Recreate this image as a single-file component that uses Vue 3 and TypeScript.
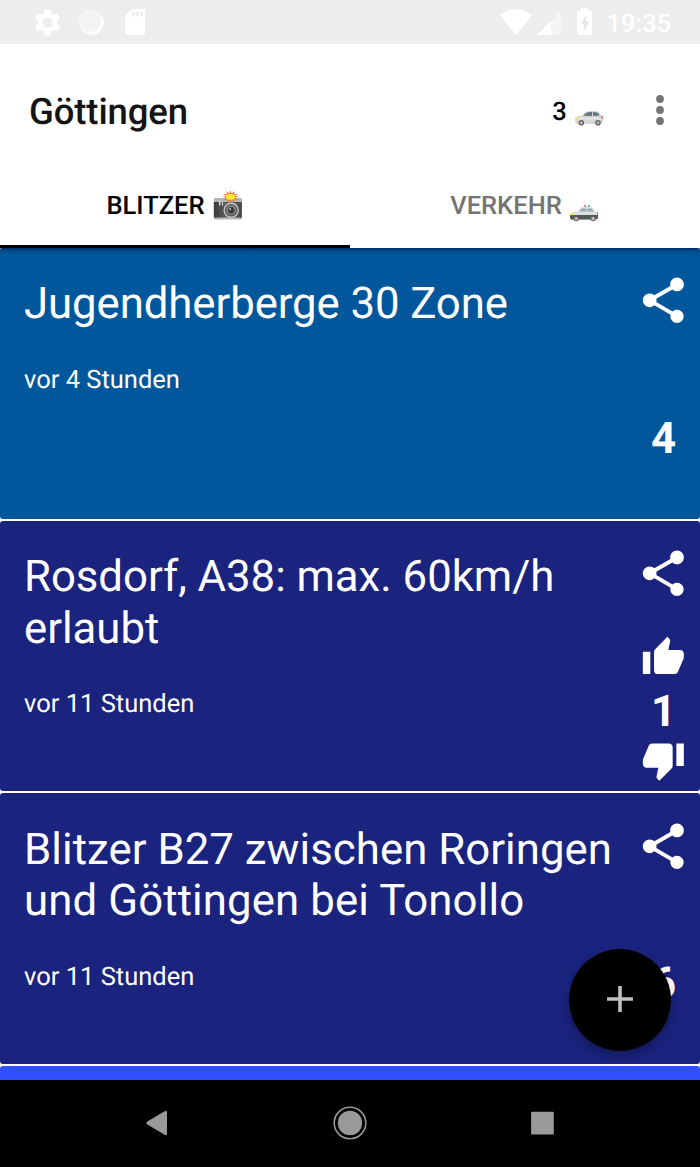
<script setup lang="ts">
interface Report {
  title: string[]
  age: string
  votes: number
  tone: 'ocean' | 'navy'
  votable: boolean
}

const reports: Report[] = [
  { title: ['Jugendherberge 30 Zone'], age: 'vor 4 Stunden', votes: 4, tone: 'ocean', votable: false },
  { title: ['Rosdorf, A38: max. 60km/h', 'erlaubt'], age: 'vor 11 Stunden', votes: 1, tone: 'navy', votable: true },
  { title: ['Blitzer B27 zwischen Roringen', 'und Göttingen bei Tonollo'], age: 'vor 11 Stunden', votes: 6, tone: 'navy', votable: false },
]

const sunRays = Array.from({ length: 12 }, (_, i) => i * 30)
</script>

<template>
  <div class="screen">
    <div class="status">
      <svg class="gear" viewBox="0 0 24 24"><path d="M19.43 12.98c.04-.32.07-.64.07-.98s-.03-.66-.07-.98l2.11-1.65c.19-.15.24-.42.12-.64l-2-3.46c-.12-.22-.39-.3-.61-.22l-2.49 1c-.52-.4-1.08-.73-1.69-.98l-.38-2.65C14.46 2.18 14.25 2 14 2h-4c-.25 0-.46.18-.49.42l-.38 2.65c-.61.25-1.17.59-1.69.98l-2.49-1c-.23-.09-.49 0-.61.22l-2 3.46c-.13.22-.07.49.12.64l2.11 1.65c-.04.32-.07.65-.07.98s.03.66.07.98l-2.11 1.65c-.19.15-.24.42-.12.64l2 3.46c.12.22.39.3.61.22l2.49-1c.52.4 1.08.73 1.69.98l.38 2.65c.03.24.24.42.49.42h4c.25 0 .46-.18.49-.42l.38-2.65c.61-.25 1.17-.59 1.69-.98l2.49 1c.23.09.49 0 .61-.22l2-3.46c.12-.22.07-.49-.12-.64l-2.11-1.65zM12 15.800c-2.100 0-3.800-1.700-3.800-3.800s1.700-3.800 3.800-3.800 3.800 1.700 3.800 3.800-1.700 3.800-3.800 3.800z" /></svg>
      <svg class="orb" viewBox="0 0 28 28">
        <circle cx="14.600" cy="14.600" r="12.200" fill="#fff" />
        <circle cx="13" cy="12.800" r="11.600" fill="#f3f3f3" />
        <circle cx="13" cy="12.800" r="10.500" fill="none" stroke="#f8f8f8" stroke-width="2" stroke-dasharray="1.500 2" />
      </svg>
      <svg class="sd" viewBox="0 0 20 26"><path d="M7 0H18a2 2 0 0 1 2 2V24a2 2 0 0 1-2 2H2a2 2 0 0 1-2-2V7z" /><path d="M7.300 3v4.500h2.400V3zM11.300 3v4.500h2.400V3zM15.300 3v4.500h2.400V3z" fill="#ededed" /></svg>
      <div class="grow"></div>
      <svg class="wifi" viewBox="0 0 32 26"><path d="M0 6.200C4.500 2 10 .2 16 .2S27.500 2 32 6.200L17 25Q16 26 15 25z" /></svg>
      <svg class="signal" viewBox="0 0 24 24"><path d="M24 0V24H0z" opacity=".4" /><path d="M14 10V24H0z" /></svg>
      <svg class="battery" viewBox="0 0 15 27"><path d="M4 0H11V3H14Q15 3 15 4V26Q15 27 14 27H1Q0 27 0 26V4Q0 3 1 3H4z" /><path d="M9 7L4 16.500H7V23L12.300 13H9z" fill="#e6e6e6" /></svg>
      <span class="clock">19:35</span>
    </div>

    <header class="appbar">
      <h1>Göttingen</h1>
      <span class="count">3</span>
      <svg class="car" viewBox="0 0 30 16">
        <path d="M1 10.500C1 7 3 6 8 5.400C12 1.200 14 .8 19 .8c5 0 6.500 1.700 8.200 4.600 1.700 1 2 2.700 2 6.600L27 14H3Q1 13 1 10.500z" fill="#d6d6d6" />
        <path d="M9.300 5.700C12.500 2.300 14 2 18 2v4zM19 2c4 0 5.500.8 6.500 3.600L19 6z" fill="#627984" />
        <path d="M4 8.500H27" stroke="#e8e8e8" stroke-width="1.500" />
        <path d="M1.500 7.500l3.500.4-1.800 2-2.200-.3z" fill="#f4ed35" /><path d="M27.200 5.800h1.500l.5 3h-1.700z" fill="#ee6b66" />
        <circle cx="7.300" cy="12.800" r="2.800" fill="#6d6262" /><circle cx="7.300" cy="12.800" r="1.400" fill="#d0c5c1" />
        <circle cx="24" cy="12.800" r="2.800" fill="#6d6262" /><circle cx="24" cy="12.800" r="1.400" fill="#d0c5c1" />
      </svg>
      <svg class="dots" viewBox="0 0 8 30"><circle cx="4" cy="4" r="3.900" /><circle cx="4" cy="15" r="3.900" /><circle cx="4" cy="26" r="3.900" /></svg>
    </header>

    <nav class="tabs">
      <div class="tab active">
        <span>BLITZER</span>
        <svg class="camera" viewBox="0 0 30 30">
          <defs><linearGradient id="body" x1="0" x2="1"><stop offset="0" stop-color="#3c3c3c" /><stop offset=".55" stop-color="#666" /><stop offset="1" stop-color="#444" /></linearGradient></defs>
          <rect x=".7" y="7" width="28.300" height="21.500" rx="1.500" fill="#b5b5b5" />
          <rect x=".9" y="11" width="27.900" height="15.500" fill="url(#body)" />
          <path d="M6 9.500h1.500v5H6zM9 10.500h1v4H9z" fill="#ddd" />
          <circle cx="18.200" cy="19.200" r="7.700" fill="#c8c8c8" /><circle cx="18.200" cy="19.200" r="6.300" fill="#555" />
          <circle cx="18.200" cy="19.200" r="4.800" fill="#999" /><circle cx="18.200" cy="19.200" r="3.500" fill="#414141" /><circle cx="17" cy="18" r="1" fill="#bbb" />
          <g transform="translate(17.500 5.800) scale(1 .76)">
            <path v-for="ray in sunRays" :key="ray" d="M-1.500-3L0-8.400 1.500-3z" fill="#f4652f" :transform="`rotate(${ray})`" />
            <ellipse rx="5.300" ry="4.500" fill="#ffa726" /><ellipse rx="4.500" ry="3.800" fill="#ffeb2f" />
          </g>
        </svg>
      </div>
      <div class="tab">
        <span>VERKEHR</span>
        <svg class="police" viewBox="0 0 30 18">
          <path d="M1 12C1 8.500 4 8 8.500 7.300L12 4Q13 3 15 3h6Q23 3 24.500 5l1.700 2.500c2 .5 3 2 3 5.500L27 16H2Q1 15 1 12z" fill="#dedede" />
          <path d="M1 11H29V14.500L27 15.500H2L1 14z" fill="#505957" />
          <path d="M10 7.500L13 4.500h4.200v3zM18.300 4.500h4L25 7.500H18.300z" fill="#91aab7" />
          <path d="M15.200 1h1.800v1.800h-1.800z" fill="#f0605f" /><path d="M19.200 1H21v1.800h-1.800z" fill="#459bd6" /><path d="M17.300 1.500H19v1.300h-1.700z" fill="#ddd" />
          <path d="M1.500 9.400l3 .2-1 1.700-2.500-.2z" fill="#f4ed35" /><path d="M28 8h1v2.500h-1z" fill="#ed5650" />
          <circle cx="7.200" cy="14.600" r="2.700" fill="#6d6262" /><circle cx="7.200" cy="14.600" r="1.500" fill="#d0c5c1" />
          <circle cx="24" cy="14.600" r="2.700" fill="#6d6262" /><circle cx="24" cy="14.600" r="1.500" fill="#d0c5c1" />
        </svg>
      </div>
    </nav>

    <main class="feed">
      <article v-for="report in reports" :key="report.title[0]" class="card" :class="report.tone">
        <div class="copy">
          <h2><span v-for="line in report.title" :key="line">{{ line }}</span></h2>
          <p>{{ report.age }}</p>
        </div>
        <div class="actions">
          <svg class="share" viewBox="0 0 24 24"><path d="M18 16.080c-.76 0-1.440.3-1.960.77L8.910 12.700c.05-.23.09-.46.09-.7s-.04-.47-.09-.7l7.050-4.110c.54.5 1.250.81 2.040.81 1.660 0 3-1.340 3-3s-1.340-3-3-3-3 1.340-3 3c0 .24.04.47.09.7L8.040 9.810C7.500 9.310 6.790 9 6 9c-1.660 0-3 1.340-3 3s1.340 3 3 3c.79 0 1.500-.31 2.040-.81l7.120 4.160c-.05.21-.08.43-.08.65 0 1.610 1.310 2.920 2.920 2.920 1.610 0 2.920-1.310 2.920-2.920s-1.310-2.920-2.920-2.920z" /></svg>
          <svg class="thumb" :class="{ off: !report.votable }" viewBox="0 0 24 24"><path d="M1 21h4V9H1v12zm22-11c0-1.100-.9-2-2-2h-6.310l.95-4.570.03-.32c0-.41-.17-.79-.44-1.060L14.170 1 7.590 7.590C7.220 7.950 7 8.450 7 9v10c0 1.100.9 2 2 2h9c.83 0 1.540-.5 1.840-1.220l3.020-7.050c.09-.23.14-.47.14-.73v-2z" /></svg>
          <b>{{ report.votes }}</b>
          <svg class="thumb" :class="{ off: !report.votable }" viewBox="0 0 24 24"><path d="M15 3H6c-.83 0-1.540.5-1.840 1.220l-3.020 7.050c-.09.23-.14.47-.14.73v2c0 1.100.9 2 2 2h6.310l-.95 4.570-.03.32c0 .41.17.79.44 1.060L9.830 23l6.590-6.590c.36-.36.58-.86.58-1.410V5c0-1.100-.9-2-2-2zm4 0v12h4V3h-4z" /></svg>
        </div>
      </article>
      <article class="card azure"></article>
    </main>

    <footer class="navbar">
      <svg class="back" viewBox="0 0 40 40"><path d="M27 9.500V30.500Q27 33 25 32L7 21.300Q5.500 20 7 18.800L25 8Q27 7 27 9.500z" /></svg>
      <svg viewBox="0 0 40 40"><circle cx="20" cy="20" r="15.800" fill="none" stroke="#999" stroke-width="1.600" /><circle cx="20" cy="20" r="12.200" /></svg>
      <svg viewBox="0 0 40 40"><rect x="9.100" y="8.800" width="22.700" height="22.700" rx="1.200" /></svg>
    </footer>

    <button class="fab" aria-label="+"><svg viewBox="0 0 26 26"><path d="M13 0V26M0 13H26" stroke="#bfbfbf" stroke-width="3.600" /></svg></button>
  </div>
</template>

<style>
body { margin: 0; background: #fff; }
</style>

<style scoped>
.screen { position: relative; width: 700px; height: 1167px; overflow: hidden; display: flex; flex-direction: column; background: #fff; font-family: Roboto, sans-serif; text-rendering: geometricPrecision; }
svg { display: block; flex: none; }
.status { height: 44px; flex: none; background: #ededed; display: flex; align-items: flex-start; fill: #fff; color: #fff; }
.gear { width: 31px; height: 31px; margin: 6.500px 0 0 31.500px; }
.orb { width: 28px; height: 28px; margin: 8px 0 0 14.500px; }
.sd { width: 20px; height: 26px; margin: 9px 0 0 20px; }
.grow { flex: 1; }
.wifi { width: 32px; height: 26px; margin: 8.500px 5px 0 0; }
.signal { width: 24px; height: 24px; margin: 11px 16px 0 0; }
.battery { width: 15px; height: 27px; margin: 8px 15px 0 0; }
.clock { width: 93.500px; margin-top: 9px; font-size: 25.500px; line-height: 30px; font-weight: 500; }
.appbar { height: 119px; flex: none; display: flex; align-items: flex-start; color: #141414; }
h1 { margin: 46px 0 0 29px; width: 523.300px; font-size: 36.460px; line-height: 43px; font-weight: 500; letter-spacing: -.1px; }
.count { width: 21.700px; margin-top: 52.500px; font-size: 25.500px; line-height: 30px; font-weight: 500; color: #000; }
.car { width: 30px; height: 16px; margin-top: 65.500px; }
.dots { width: 8px; height: 30px; margin: 50.500px 0 0 51.800px; fill: #757575; }
.tabs { height: 85px; flex: none; display: flex; }
.tab { flex: 1; box-sizing: border-box; display: flex; justify-content: center; font-size: 25.500px; line-height: 30px; font-weight: 500; padding: 28px 1px 0 0; color: #757575; }
.tab.active { color: #000; border-bottom: 3.500px solid #000; }
.camera { width: 30px; height: 30px; margin: 0 0 0 8px; }
.police { width: 30px; height: 18px; margin: 12.500px 0 0 7px; }
.feed { flex: 1; min-height: 0; overflow: hidden; display: flex; flex-direction: column; gap: 2.200px; position: relative; }
.feed::before { content: ""; position: absolute; inset: 0 0 auto; height: 7px; background: linear-gradient(rgba(0, 0, 45, .5), rgba(0, 0, 45, .12) 40%, transparent); }
.card { height: 270.500px; flex: none; display: flex; border-radius: 3px; color: #fff; }
.ocean { background: #01579b; }
.navy { background: #1a237e; }
.azure { background: #304ffe; }
.copy { width: 612.300px; padding: 30.200px 0 0 24px; }
h2 { margin: 0; font-size: 43.750px; line-height: 51.900px; font-weight: 400; white-space: nowrap; letter-spacing: -.04px; }
h2 span { display: block; }
.ocean h2 { letter-spacing: -.09px; }
.card:nth-child(3) h2 { letter-spacing: .04px; }
.card:nth-child(3) h2 span:last-child { letter-spacing: .11px; }
p { margin: 34.600px 0 0; font-size: 25.500px; line-height: 30px; }
.actions { width: 54.700px; display: flex; flex-direction: column; align-items: center; fill: #fff; }
.share { width: 54.700px; height: 54.700px; margin: 25.200px 0 34.600px; }
.thumb { width: 44.700px; height: 44.700px; }
.off { visibility: hidden; }
b { margin: 5.900px 0 .8px; font-size: 43.750px; line-height: 51.300px; font-weight: 700; }
.navbar { height: 87.500px; flex: none; background: #000; display: flex; justify-content: center; align-items: center; gap: 152.300px; fill: #999; }
.navbar svg { width: 40px; height: 40px; }
.navbar .back { margin: 0 -2.600px 0 2.600px; }
.fab { position: absolute; left: 569px; top: 948.500px; width: 102px; height: 102px; padding: 0; border: 0; border-radius: 50%; background: #000; display: grid; place-items: center; box-shadow: 0 5px 10px rgba(0, 0, 0, .28); }
.fab svg { width: 26px; height: 26px; margin-bottom: 1px; }
</style>
